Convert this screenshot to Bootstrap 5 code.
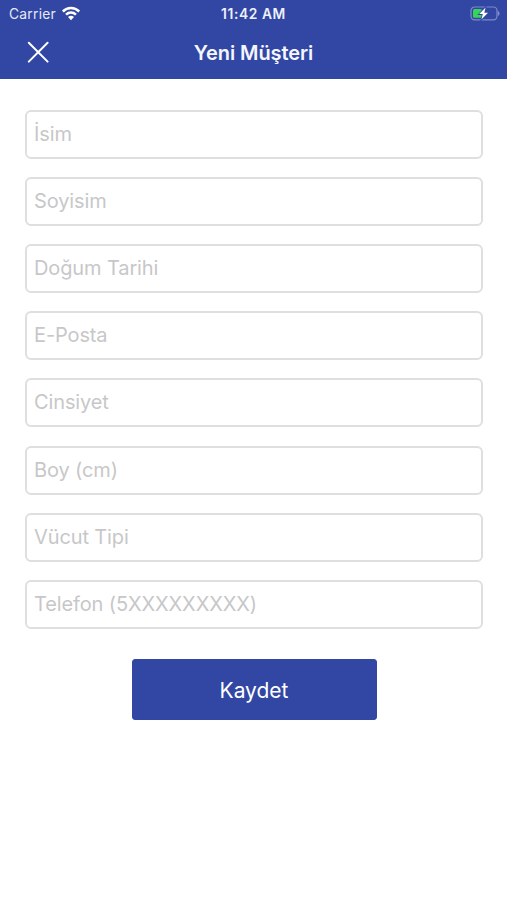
<!DOCTYPE html>
<html lang="tr">
<head>
<meta charset="utf-8">
<meta name="viewport" content="width=device-width, initial-scale=1">
<title>Yeni Müşteri</title>
<link href="https://cdn.jsdelivr.net/npm/bootstrap@5.3.0/dist/css/bootstrap.min.css" rel="stylesheet">
<style>
  body { font-family: Inter, "Liberation Sans", sans-serif; min-height: 900px; }
  .app-header { background: #3147a3; height: 79px; }
  .status-bar { height: 27px; font-size: 13.8px; line-height: 28px; padding: 0 7px 0 9px; }
  .status-bar > * { flex: 1 1 0; }
  .carrier { letter-spacing: .25px; color: #e6e9f6; }
  .carrier + svg { margin-left: 5px; }
  .clock { font-size: 13.8px; font-weight: 600; letter-spacing: .6px; margin: 0 1px 0 -1px; color: #eef0fa; }
  .title-bar { height: 50px; padding: 0 27px; }
  .title-bar h1 { font-size: 20px; font-weight: 600; line-height: 50px; padding-top: 1px; letter-spacing: -.08px; color: #f4f6fd; }
  .title-bar .side { width: 23px; }
  .customer-form { padding: 30.6px 24px 0 25px; }
  .fields { gap: 18.2px; }
  .fields .form-control { height: 49px; padding: 0 7px 1px; border: 2px solid #dfdfdf; border-radius: 6px; font-size: 20px; letter-spacing: -.12px; }
  .fields .form-control::placeholder { color: #c7c7c9; opacity: 1; }
  .save-btn { --bs-btn-bg: #3147a3; --bs-btn-border-color: #3147a3; --bs-btn-color: #fff; --bs-btn-hover-bg: #293c8c; --bs-btn-hover-color: #fff; --bs-btn-border-radius: 3px; width: 245px; height: 61px; margin-top: 30.4px; padding: 2px 0 0; font-size: 21px; }
</style>
</head>
<body class="bg-white">
<header class="app-header text-white">
  <div class="status-bar d-flex align-items-center">
    <div class="d-flex align-items-center">
      <span class="carrier">Carrier</span>
      <svg width="20" height="16" viewBox="0 0 20 16" fill="none" stroke="#fff" stroke-width="2.5" aria-hidden="true">
        <path d="M1.8 5.5C6.5 .9 13.5 .9 18.2 5.5"/>
        <path d="M5 8.7C8 5.9 12 5.9 15 8.7"/>
        <path d="M7 11Q10 8.5 13 11L10 14.2Z" fill="#fff" stroke="none"/>
      </svg>
    </div>
    <div class="clock text-center">11:42 AM</div>
    <div class="d-flex justify-content-end">
      <svg width="32" height="16" viewBox="0 0 32 16" aria-hidden="true">
        <rect x="3" y="1" width="26" height="12.8" rx="3.6" fill="none" stroke="#7f8cc9" stroke-width="1.2"/>
        <path d="M29.8 4.6Q33.4 7.4 29.8 10.2Z" fill="#7f8cc9"/>
        <rect x="5" y="3" width="9" height="8.8" rx="1.6" fill="#36d45b"/>
        <path d="M17.6 1.4L11.2 8.1H14.8L13.4 13.6L20 6.8H16.3Z" fill="#fff" stroke="#3147a3" stroke-width="1.6" paint-order="stroke"/>
      </svg>
    </div>
  </div>
  <div class="title-bar d-flex align-items-center justify-content-between">
    <a href="#" class="side d-flex text-white" aria-label="Kapat">
      <svg width="23" height="23" viewBox="0 0 23 23" stroke="currentColor" stroke-width="2" stroke-linecap="round"><path d="M1.8 1.8L20.6 20.6M20.6 1.8L1.8 20.6"/></svg>
    </a>
    <h1 class="m-0">Yeni Müşteri</h1>
    <span class="side"></span>
  </div>
</header>
<main>
  <form class="customer-form d-flex flex-column">
    <div class="fields d-flex flex-column">
      <input class="form-control" type="text" placeholder="İsim">
      <input class="form-control" type="text" placeholder="Soyisim">
      <input class="form-control" type="text" placeholder="Doğum Tarihi">
      <input class="form-control" type="email" placeholder="E-Posta">
      <input class="form-control" type="text" placeholder="Cinsiyet">
      <input class="form-control" type="text" placeholder="Boy (cm)">
      <input class="form-control" type="text" placeholder="Vücut Tipi">
      <input class="form-control" type="tel" placeholder="Telefon (5XXXXXXXXX)">
    </div>
    <button type="button" class="btn save-btn align-self-center">Kaydet</button>
  </form>
</main>
<script src="https://cdn.jsdelivr.net/npm/bootstrap@5.3.0/dist/js/bootstrap.bundle.min.js"></script>
</body>
</html>
